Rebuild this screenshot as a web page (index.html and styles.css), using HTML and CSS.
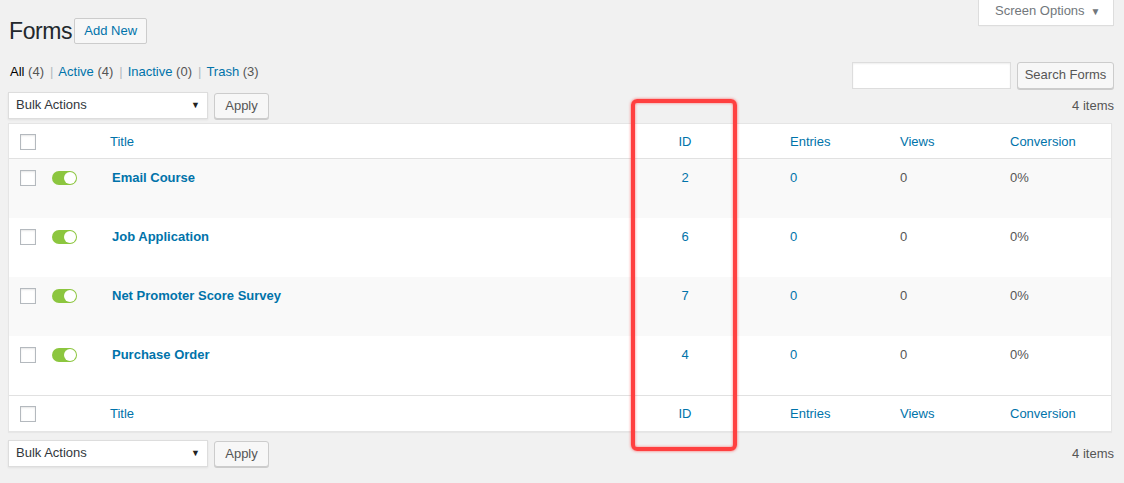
FILE: index.html
```html
<!DOCTYPE html>
<html>
<head>
<meta charset="utf-8">
<title>Forms</title>
<link rel="stylesheet" href="styles.css">
</head>
<body>
<div class="wrap">
  <div class="header">
    <div class="title-wrap">
      <h1 class="page-title">Forms</h1>
      <a class="btn btn-add">Add New</a>
    </div>
    <div class="screen-opts">Screen Options <span class="caret">▼</span></div>
  </div>

  <div class="filters">
    <ul class="subsubsub">
      <li><span class="current">All</span> <span class="count">(4)</span><span class="sep">|</span></li>
      <li><a>Active</a> <span class="count">(4)</span><span class="sep">|</span></li>
      <li><a>Inactive</a> <span class="count">(0)</span><span class="sep">|</span></li>
      <li><a>Trash</a> <span class="count">(3)</span></li>
    </ul>
    <div class="search-box">
      <div class="search-input"></div>
      <a class="btn btn-search">Search Forms</a>
    </div>
  </div>

  <div class="tablenav top">
    <div class="actions">
      <div class="select">Bulk Actions <span class="sel-arrow">▼</span></div>
      <a class="btn btn-apply">Apply</a>
    </div>
    <div class="num-items">4 items</div>
  </div>

  <table class="forms-table">
    <colgroup>
      <col class="c-cb"><col class="c-tg"><col class="c-title"><col class="c-id"><col class="c-entries"><col class="c-views"><col class="c-conv">
    </colgroup>
    <thead>
      <tr>
        <th class="cb"><span class="checkbox"></span></th>
        <th></th>
        <th class="link">Title</th>
        <th class="link center">ID</th>
        <th class="link">Entries</th>
        <th class="link">Views</th>
        <th class="link">Conversion</th>
      </tr>
    </thead>
    <tbody>
      <tr class="alt">
        <td class="cb"><span class="checkbox"></span></td>
        <td class="tg"><span class="toggle"></span></td>
        <td class="name"><a>Email Course</a></td>
        <td class="center"><a>2</a></td>
        <td><a>0</a></td>
        <td>0</td>
        <td>0%</td>
      </tr>
      <tr>
        <td class="cb"><span class="checkbox"></span></td>
        <td class="tg"><span class="toggle"></span></td>
        <td class="name"><a>Job Application</a></td>
        <td class="center"><a>6</a></td>
        <td><a>0</a></td>
        <td>0</td>
        <td>0%</td>
      </tr>
      <tr class="alt">
        <td class="cb"><span class="checkbox"></span></td>
        <td class="tg"><span class="toggle"></span></td>
        <td class="name"><a>Net Promoter Score Survey</a></td>
        <td class="center"><a>7</a></td>
        <td><a>0</a></td>
        <td>0</td>
        <td>0%</td>
      </tr>
      <tr>
        <td class="cb"><span class="checkbox"></span></td>
        <td class="tg"><span class="toggle"></span></td>
        <td class="name"><a>Purchase Order</a></td>
        <td class="center"><a>4</a></td>
        <td><a>0</a></td>
        <td>0</td>
        <td>0%</td>
      </tr>
    </tbody>
    <tfoot>
      <tr>
        <th class="cb"><span class="checkbox"></span></th>
        <th></th>
        <th class="link">Title</th>
        <th class="link center">ID</th>
        <th class="link">Entries</th>
        <th class="link">Views</th>
        <th class="link">Conversion</th>
      </tr>
    </tfoot>
  </table>

  <div class="tablenav bottom">
    <div class="actions">
      <div class="select">Bulk Actions <span class="sel-arrow">▼</span></div>
      <a class="btn btn-apply">Apply</a>
    </div>
    <div class="num-items">4 items</div>
  </div>

  <div class="highlight"></div>
</div>
</body>
</html>
```

FILE: styles.css
```css
* { box-sizing: border-box; }

html, body {
  margin: 0;
  padding: 0;
  background: #f1f1f1;
}

body {
  font-family: "Liberation Sans", Arial, sans-serif;
  font-size: 13px;
  color: #444;
  line-height: 1.4;
}

a { color: #0073aa; text-decoration: none; }

.wrap {
  position: relative;
  padding: 0 11px 0 8px;
  height: 483px;
}

.header {
  display: flex;
  justify-content: space-between;
  align-items: flex-start;
}

.title-wrap {
  display: flex;
  align-items: center;
  margin-top: 18px;
}

.page-title {
  margin: 0 2px 0 1px;
  font-size: 23px;
  font-weight: 400;
  color: #23282d;
  line-height: 26px;
  letter-spacing: -0.4px;
}

.btn {
  display: inline-flex;
  align-items: center;
  justify-content: center;
  height: 26px;
  border: 1px solid #ccc;
  border-radius: 3px;
  background: #f7f7f7;
  box-shadow: 0 1px 0 #ccc;
  color: #555;
  font-size: 13px;
  padding: 0 9px;
}

.btn-add {
  color: #0073aa;
  height: 26px;
  width: 73px;
  border-radius: 2px;
  box-shadow: none;
  font-size: 13px;
  padding: 0;
}

.screen-opts {
  width: 136px;
  height: 26px;
  margin-right: -1px;
  background: #fff;
  border: 1px solid #ddd;
  border-top: none;
  box-shadow: 0 1px 1px -1px rgba(0,0,0,.1);
  color: #72777c;
  display: flex;
  align-items: center;
  padding-left: 16px;
  padding-bottom: 2px;
}

.screen-opts .caret {
  font-size: 10px;
  margin-left: 6px;
  color: #72777c;
}

.filters {
  display: flex;
  justify-content: space-between;
  align-items: flex-start;
  margin-top: 18px;
}

.subsubsub {
  list-style: none;
  margin: 0;
  padding: 1px 0 0 2px;
  display: flex;
  color: #555;
  font-size: 13px;
}

.subsubsub .current { color: #000; }
.subsubsub .count { color: #555; }
.subsubsub .sep { color: #b4b9be; margin: 0 5px 0 6px; }

.search-box {
  display: flex;
  align-items: center;
  gap: 6px;
  margin-right: -1px;
}

.search-input {
  width: 159px;
  height: 27px;
  background: #fff;
  border: 1px solid #ddd;
  box-shadow: inset 0 1px 2px rgba(0,0,0,.07);
}

.btn-search {
  width: 97px;
  height: 27px;
  padding: 0;
}

.tablenav {
  display: flex;
  justify-content: space-between;
  align-items: center;
  height: 26px;
}

.tablenav.top { margin-top: 3px; }
.tablenav.bottom { margin-top: 8px; }

.actions {
  display: flex;
  align-items: flex-start;
  gap: 6px;
}

.select {
  width: 200px;
  height: 27px;
  background: #fff;
  border: 1px solid #ddd;
  box-shadow: 0 1px 2px rgba(0,0,0,.07);
  color: #32373c;
  font-size: 13px;
  display: flex;
  align-items: center;
  justify-content: space-between;
  padding: 1px 7px 0 7px;
}

.sel-arrow {
  font-size: 9px;
  color: #222;
}

.btn-apply {
  width: 55px;
  height: 26px;
  margin-top: 1px;
  padding: 1px 0 0;
}

.num-items {
  color: #555;
  font-size: 13px;
  padding-top: 2px;
  margin-right: -1px;
}

.forms-table {
  margin-top: 5px;
  width: 1104px;
  table-layout: fixed;
  border-collapse: separate;
  border-spacing: 0;
  background: #fff;
  border: 1px solid #e5e5e5;
  box-shadow: 0 1px 1px rgba(0,0,0,.04);
}

.c-cb { width: 39px; }
.c-tg { width: 52px; }
.c-title { width: 490px; }
.c-id { width: 190px; }
.c-entries { width: 110px; }
.c-views { width: 110px; }
.c-conv { width: 111px; }

.forms-table th {
  font-weight: 400;
  text-align: left;
  padding: 8px 10px 7px;
  line-height: 19px;
  height: 35px;
  color: #32373c;
}

.forms-table thead th { border-bottom: 1px solid #e1e1e1; }
.forms-table tfoot th {
  border-top: 1px solid #e1e1e1;
  padding: 8px 10px 8px;
  height: 36px;
}

.forms-table th.link { color: #0073aa; }
.forms-table .center { text-align: center; }

.forms-table td {
  padding: 9px 10px 30px;
  line-height: 20px;
  height: 59px;
  vertical-align: top;
  color: #555;
}

.forms-table tr.alt td { background: #f9f9f9; }

.forms-table .cb {
  padding-left: 11px;
  padding-right: 0;
}

.forms-table td.tg { padding-left: 4px; padding-right: 0; }

.forms-table td.name {
  padding-left: 12px;
  font-weight: 700;
  font-size: 13px;
}

.checkbox {
  display: block;
  width: 16px;
  height: 16px;
  background: #fff;
  border: 1px solid #b4b9be;
  box-shadow: inset 0 1px 2px rgba(0,0,0,.1);
  margin-top: 1px;
}

.forms-table td .checkbox { margin-top: 2px; }

.toggle {
  display: block;
  position: relative;
  width: 25px;
  height: 14px;
  margin-top: 3px;
  border-radius: 7px;
  background: #8cc63f;
}

.toggle::after {
  content: "";
  position: absolute;
  top: 1px;
  right: 1px;
  width: 12px;
  height: 12px;
  border-radius: 50%;
  background: #fff;
}

.highlight {
  position: absolute;
  left: 631px;
  top: 99px;
  width: 106px;
  height: 352px;
  border: 4px solid #ff4040;
  border-radius: 6px;
  box-shadow: 0 0 3px rgba(255,40,40,.7), inset 0 0 3px rgba(255,40,40,.6);
  pointer-events: none;
}
```
